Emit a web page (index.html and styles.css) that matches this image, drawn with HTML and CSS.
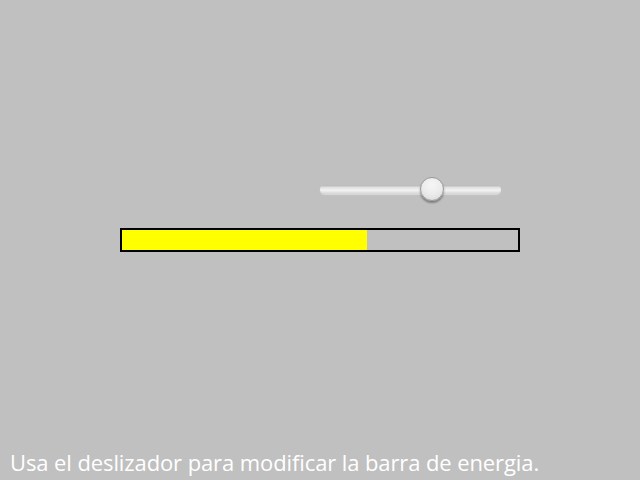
FILE: index.html
```html
<!DOCTYPE html>
<html lang="es">
<head>
<meta charset="utf-8">
<title>Barra de energía</title>
<link rel="stylesheet" href="styles.css">
</head>
<body>
<main class="screen">
  <div class="controls">
    <input class="slider" type="range" min="0" max="100" value="64" aria-label="Energía">
    <div class="bar"><div class="fill" style="width: 245px"></div></div>
  </div>
  <p class="hint">Usa el deslizador para modificar la barra de energia.</p>
</main>
</body>
</html>
```

FILE: styles.css
```css
html, body {
  margin: 0;
  padding: 0;
  background: #c0c0c0;
}

.screen {
  width: 640px;
  height: 480px;
  display: flex;
  flex-direction: column;
  box-sizing: border-box;
  padding-top: 177px;
}

.controls {
  display: flex;
  flex-direction: column;
  gap: 27px;
}

.slider {
  -webkit-appearance: none;
  appearance: none;
  margin: 0 0 0 320px;
  padding: 0;
  width: 181px;
  height: 24px;
  background: transparent;
}

.slider::-webkit-slider-runnable-track {
  height: 9px;
  border-radius: 5px;
  background: linear-gradient(#b4b4b4, #e4e4e4 30%, #f2f2f2 60%, #d4d4d4);
  box-shadow: 0 1px 1px rgba(255,255,255,0.4);
}

.slider::-webkit-slider-thumb {
  -webkit-appearance: none;
  appearance: none;
  width: 24px;
  height: 24px;
  margin-top: -8px;
  border-radius: 50%;
  box-sizing: border-box;
  border: 1px solid #9a9a9a;
  background: radial-gradient(circle at 50% 30%, #f6f6f6, #ececec 50%, #d6d6d6);
  box-shadow: 0 2px 2px rgba(0,0,0,0.35);
}

.bar {
  margin-left: 120px;
  width: 400px;
  height: 24px;
  box-sizing: border-box;
  border: 2px solid #000;
  background: #c0c0c0;
}

.fill {
  height: 100%;
  background: #ffff00;
}

.hint {
  margin: auto 0 0 0;
  padding: 0 0 6px 10px;
  font-family: "Open Sans", "DejaVu Sans", sans-serif;
  font-size: 22px;
  line-height: 24px;
  letter-spacing: -0.1px;
  color: #ffffff;
}
```
